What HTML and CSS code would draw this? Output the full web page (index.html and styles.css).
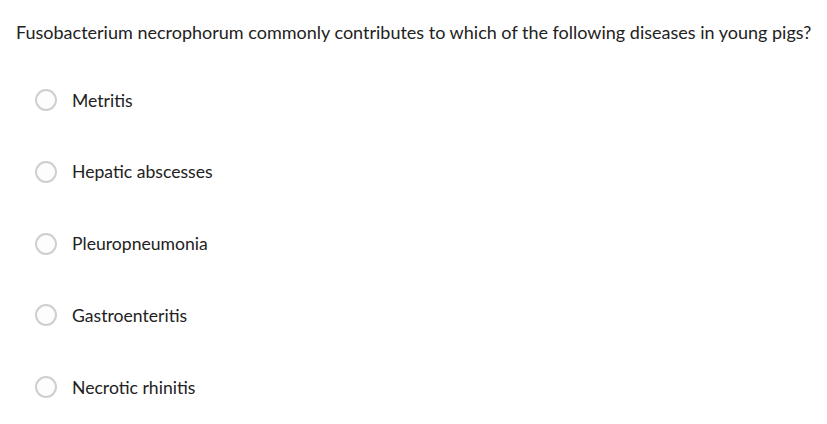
FILE: index.html
```html
<!DOCTYPE html>
<html>
<head>
<meta charset="utf-8">
<link rel="stylesheet" href="styles.css">
</head>
<body>
<div class="quiz">
  <p class="question">Fusobacterium necrophorum commonly contributes to which of the following diseases in young pigs?</p>
  <ul class="options">
    <li class="option"><span class="radio"></span><span class="label">Metritis</span></li>
    <li class="option"><span class="radio"></span><span class="label">Hepatic abscesses</span></li>
    <li class="option"><span class="radio"></span><span class="label">Pleuropneumonia</span></li>
    <li class="option"><span class="radio"></span><span class="label">Gastroenteritis</span></li>
    <li class="option"><span class="radio"></span><span class="label">Necrotic rhinitis</span></li>
  </ul>
</div>
</body>
</html>
```
FILE: styles.css
```css
html, body {
  margin: 0;
  padding: 0;
  background: #ffffff;
}
body {
  font-family: Lato, "Noto Sans", sans-serif;
  color: #222222;
}
.quiz {
  padding: 20px 0 0 16px;
}
.question {
  margin: 0;
  font-size: 18px;
  line-height: 24px;
  color: #222222;
  white-space: nowrap;
}
.options {
  list-style: none;
  margin: 0;
  padding: 45px 0 0 19px;
  display: flex;
  flex-direction: column;
  gap: 49.8px;
}
.option {
  display: flex;
  align-items: center;
  height: 22px;
}
.radio {
  box-sizing: border-box;
  width: 22px;
  height: 22px;
  border-radius: 50%;
  border: 2px solid #cfcfcf;
  background: #fdfdfd;
  flex: none;
}
.label {
  margin-left: 15px;
  font-size: 17.6px;
  color: #222222;
}
```
